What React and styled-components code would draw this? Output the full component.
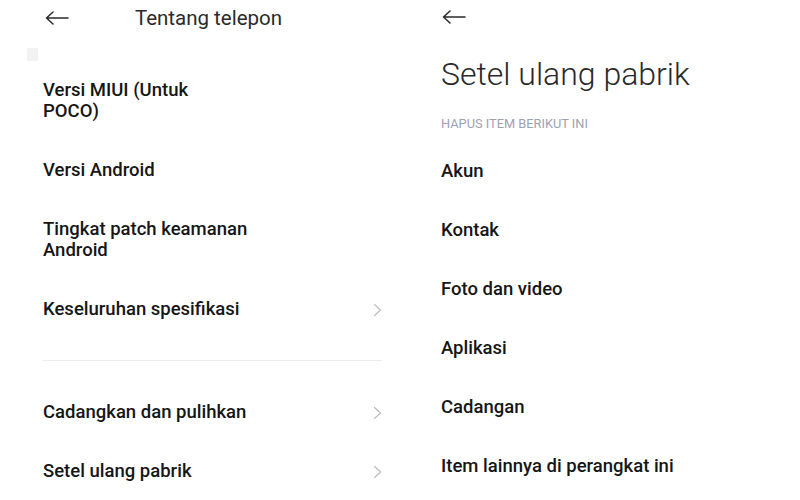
import React from "react";
import styled, { createGlobalStyle } from "styled-components";

const Global = createGlobalStyle`
  html, body { margin: 0; padding: 0; background: #fff; }
  body { font-family: Roboto, "Noto Sans", sans-serif; color: #141414; }
`;

const Page = styled.div`
  width: 800px;
  height: 500px;
  display: grid;
  grid-template-columns: 400px 400px;
  overflow: hidden;
  background: #fff;
`;

const Panel = styled.div`
  position: relative;
  display: flex;
  flex-direction: column;
  padding: 0 ${(p) => p.$right || 18}px 0 ${(p) => p.$left || 43}px;
`;

const Header = styled.div`
  height: ${(p) => p.$h}px;
  display: flex;
  align-items: center;
  position: relative;
  margin-bottom: ${(p) => p.$gap || 0}px;
`;

const Back = styled.svg`
  width: 24px;
  height: 14px;
  margin-left: ${(p) => p.$ml || 0}px;
  flex: none;
`;

const HeaderTitle = styled.div`
  position: absolute;
  left: 0;
  right: 0;
  text-align: center;
  font-size: 20.5px;
  font-weight: 400;
  color: #2b2b2b;
  padding-right: 8px;
`;

const Stray = styled.span`
  position: absolute;
  left: 27px;
  top: 48px;
  width: 11px;
  height: 13px;
  background: #f2f2f2;
`;

const Row = styled.div`
  display: flex;
  align-items: center;
  justify-content: space-between;
  padding: 19px 0;
`;

const Label = styled.div`
  font-size: 18.5px;
  line-height: 21px;
  font-weight: 500;
  color: #161616;
  max-width: ${(p) => p.$max || 400}px;
`;

const Chevron = styled.svg`
  width: 9px;
  height: 14px;
  flex: none;
`;

const Divider = styled.div`
  height: 1px;
  background: #ebebeb;
  margin: 21px 0 22px;
`;

const BigTitle = styled.h1`
  margin: 0;
  height: 52px;
  display: flex;
  align-items: center;
  font-size: 32px;
  font-weight: 300;
  color: #2a2a2a;
`;

const Caption = styled.div`
  margin-top: 16px;
  height: 16px;
  line-height: 16px;
  font-size: 12.8px;
  color: #9da2b0;
  margin-bottom: 10px;
`;

const Arrow = (props) => (
  <Back viewBox="0 0 24 14" {...props}>
    <path d="M1.5 7 H23 M8 1 L1.5 7 L8 13" fill="none" stroke="#2a2a2a" strokeWidth="1.5" strokeLinecap="round" strokeLinejoin="round" />
  </Back>
);

const Next = () => (
  <Chevron viewBox="0 0 9 14">
    <path d="M1.5 1.5 L7.5 7 L1.5 12.5" fill="none" stroke="#bdbdbd" strokeWidth="1.2" strokeLinecap="round" strokeLinejoin="round" />
  </Chevron>
);

const Item = ({ children, arrow, max }) => (
  <Row>
    <Label $max={max}>{children}</Label>
    {arrow && <Next />}
  </Row>
);

export default function App() {
  const wipe = ["Akun", "Kontak", "Foto dan video", "Aplikasi", "Cadangan", "Item lainnya di perangkat ini"];
  return (
    <>
      <Global />
      <Page>
        <Panel $left={43} $right={18}>
          <Stray />
          <Header $h={36} $gap={25}>
            <Arrow $ml={2} />
            <HeaderTitle>Tentang telepon</HeaderTitle>
          </Header>
          <Item max={175}>Versi MIUI (Untuk POCO)</Item>
          <Item>Versi Android</Item>
          <Item max={240}>Tingkat patch keamanan Android</Item>
          <Item arrow>Keseluruhan spesifikasi</Item>
          <Divider />
          <Item arrow>Cadangkan dan pulihkan</Item>
          <Item arrow>Setel ulang pabrik</Item>
        </Panel>
        <Panel $left={41} $right={18}>
          <Header $h={34} $gap={14}>
            <Arrow $ml={1} />
          </Header>
          <BigTitle>Setel ulang pabrik</BigTitle>
          <Caption>HAPUS ITEM BERIKUT INI</Caption>
          {wipe.map((w) => (
            <Item key={w}>{w}</Item>
          ))}
        </Panel>
      </Page>
    </>
  );
}
